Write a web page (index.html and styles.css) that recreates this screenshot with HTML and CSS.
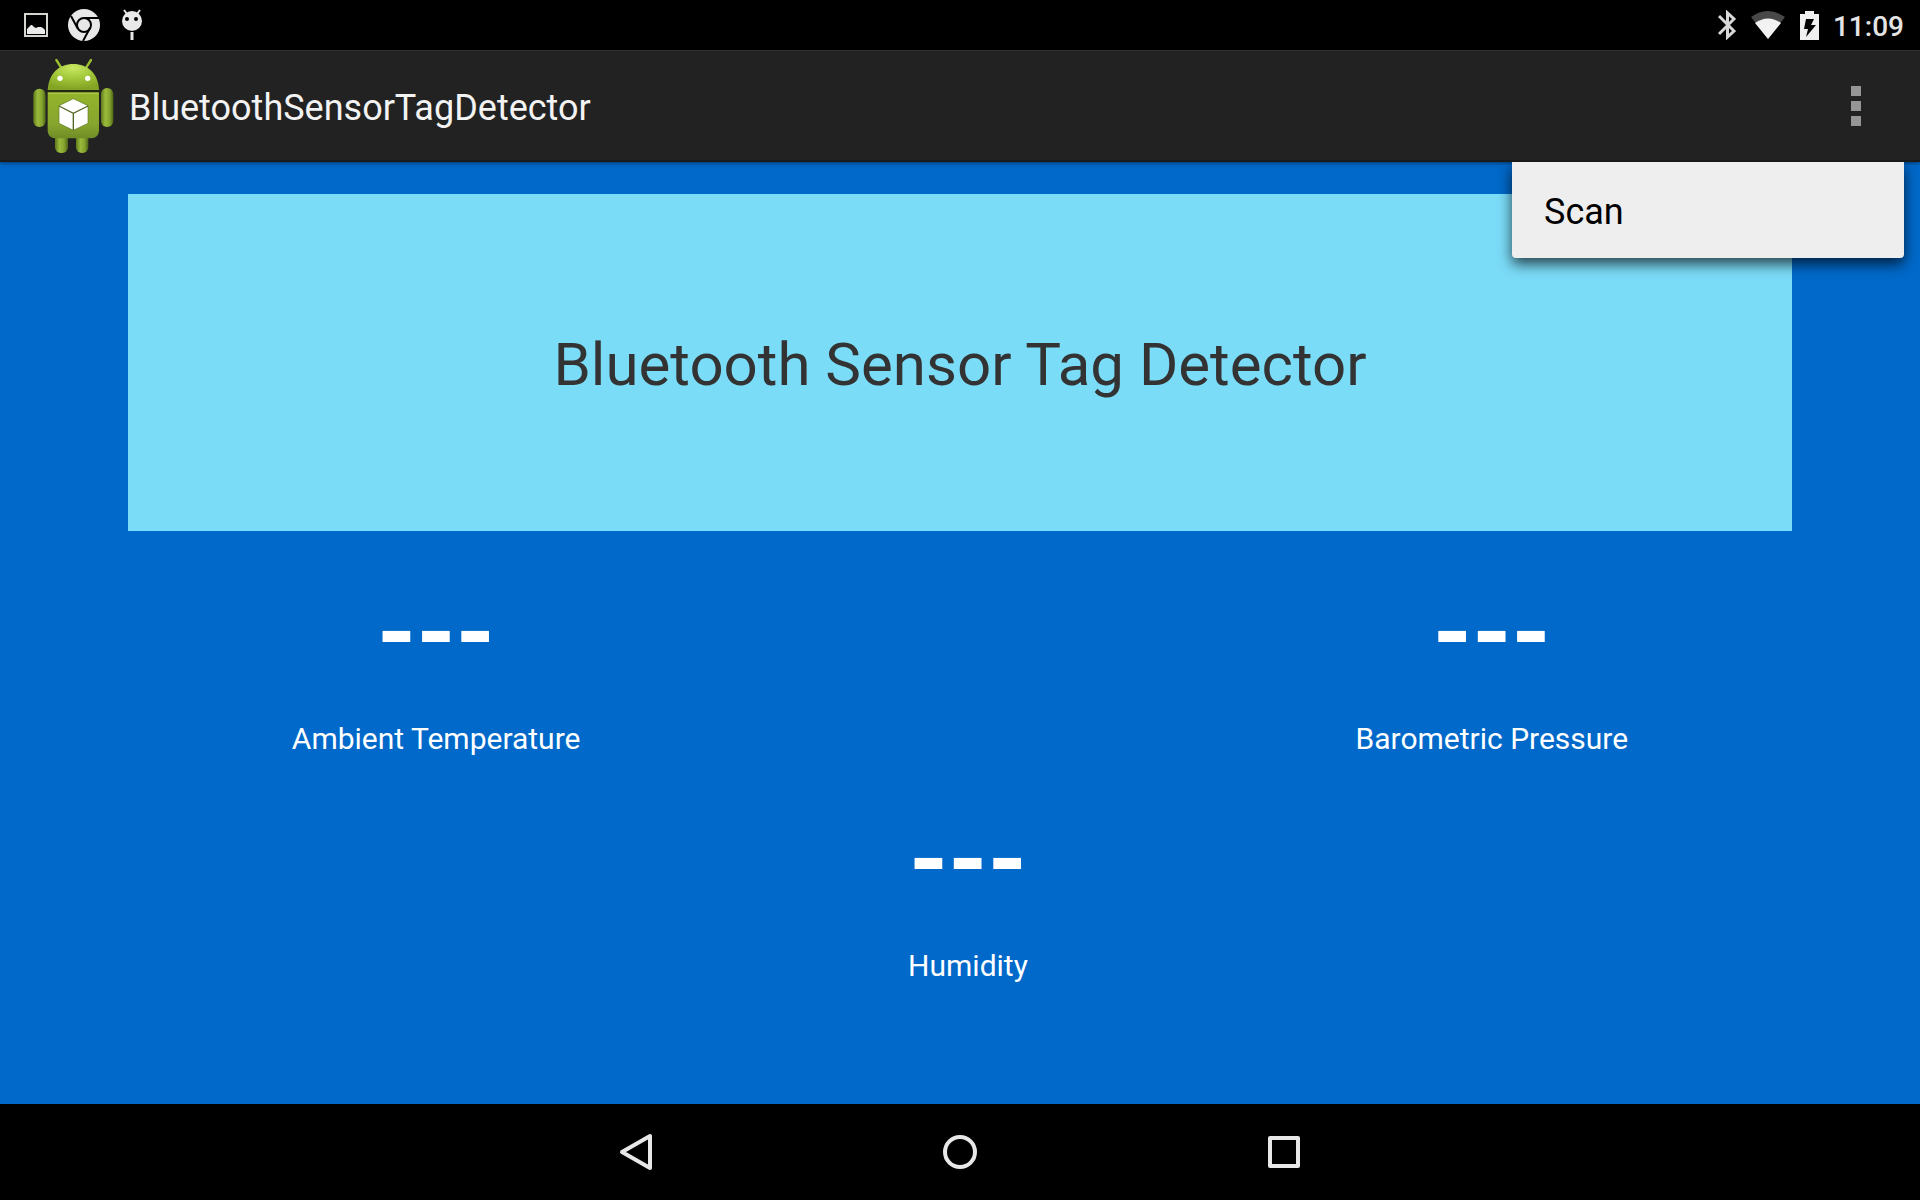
FILE: index.html
```html
<!DOCTYPE html>
<html lang="en">
<head>
<meta charset="UTF-8">
<meta name="viewport" content="width=device-width, initial-scale=1">
<title>BluetoothSensorTagDetector</title>
<link rel="stylesheet" href="styles.css">
</head>
<body>
<div class="status-bar">
<div class="notifications">
<svg class="icon-picture" viewBox="0 0 24 24" width="24" height="24">
<rect x="1" y="1" width="22" height="22" fill="none" stroke="#d4d4d0" stroke-width="2"/>
<path d="M3 21V16L5 14L7 12H8L10 14L12 15L14 14H17L19 15L21 17V21Z" fill="#ebebeb"/>
</svg>
<svg class="icon-chrome" viewBox="0 0 32 32" width="32" height="32">
<circle cx="16" cy="16" r="16" fill="#e8e8e8"/>
<g fill="none" stroke="#000" stroke-width="2">
<circle cx="16" cy="16" r="7"/>
<path d="M16 9H31M10 20L3 7M22 19L15 32"/>
</g>
</svg>
<svg class="icon-debug" viewBox="0 0 24 32" width="24" height="32">
<path d="M4 1L7 5M20 1L17 5" stroke="#e8e8e8" stroke-width="2"/>
<circle cx="12" cy="12" r="10" fill="#e8e8e8"/>
<circle cx="7" cy="10" r="2" fill="#000"/>
<circle cx="16" cy="10" r="2" fill="#000"/>
<path d="M12 23V31" stroke="#e8e8e8" stroke-width="3"/>
</svg>
</div>
<div class="system-status">
<svg class="icon-bluetooth" viewBox="0 0 18 30" width="18" height="30">
<path d="M1 6L16 21L9.500 27V3L16 9L1 24" fill="none" stroke="#d8d8d8" stroke-width="3"/>
</svg>
<svg class="icon-wifi" viewBox="0 0 36 30" width="36" height="30">
<path d="M1 7Q17.500 -5 35 7L18 29Z" fill="#484848"/>
<path d="M5 13Q18 4 31 13L18 29Z" fill="#f2f2f2"/>
</svg>
<svg class="icon-battery" viewBox="0 0 19 30" width="19" height="30">
<path d="M5 1H14V4H19V30H0V4H5Z" fill="#f0f0f0"/>
<path d="M6 9H14L11 15H16L6 27L8 19H4Z" fill="#000"/>
</svg>
<span class="clock">11:09</span>
</div>
</div>

<header class="action-bar">
<svg class="app-icon" viewBox="36 36 252 288" width="84" height="96">
<defs>
<linearGradient id="body" x1="0" y1="0" x2="0" y2="1">
<stop offset="0" stop-color="#94b42c"/>
<stop offset="0.700" stop-color="#86a52e"/>
<stop offset="1" stop-color="#6f8c26"/>
</linearGradient>
<radialGradient id="head" cx="0.500" cy="0.150" r="0.800">
<stop offset="0" stop-color="#c8e763"/>
<stop offset="0.500" stop-color="#a3c83a"/>
<stop offset="1" stop-color="#84a524"/>
</radialGradient>
<linearGradient id="limb" x1="0" y1="0" x2="1" y2="0">
<stop offset="0" stop-color="#5f7a1c"/>
<stop offset="0.350" stop-color="#9aba3c"/>
<stop offset="0.700" stop-color="#85a42d"/>
<stop offset="1" stop-color="#4d6416"/>
</linearGradient>
</defs>
<path d="M109 42L125 67M213 42L197 67" stroke="#9dc02f" stroke-width="7" stroke-linecap="round"/>
<rect x="105" y="248" width="39" height="73" rx="17" fill="url(#limb)"/>
<rect x="168" y="248" width="37" height="73" rx="17" fill="url(#limb)"/>
<rect x="40" y="128" width="37" height="115" rx="18" fill="url(#limb)"/>
<rect x="243" y="126" width="37" height="117" rx="18" fill="url(#limb)"/>
<path d="M83 132C86 82 117 54 160 54S235 82 237 132Z" fill="url(#head)"/>
<path d="M83 139H237V255Q235 276 214 277H105Q85 276 83 255Z" fill="url(#body)"/>
<path d="M82 135H238" stroke="#222b10" stroke-width="5"/>
<path d="M85 142H235" stroke="#b1cf4e" stroke-width="3"/>
<circle cx="120" cy="97" r="8" fill="#fff"/>
<circle cx="203" cy="97" r="8" fill="#fff"/>
<path d="M160 158L204 179V232L160 253L117 232V179Z" fill="#fff" stroke="#657d26" stroke-width="2"/>
<path d="M117 180L160 202L204 180M160 202V253" fill="none" stroke="#536622" stroke-width="4"/>
</svg>
<h1 class="app-title">BluetoothSensorTagDetector</h1>
<button class="overflow" type="button" aria-label="More options" aria-expanded="true" aria-controls="menu">
<span class="dot"></span>
<span class="dot"></span>
<span class="dot"></span>
</button>
<div class="menu" id="menu">
<button class="menu-item" type="button">Scan</button>
</div>
</header>

<main class="content">
<h2 class="banner">Bluetooth Sensor Tag Detector</h2>
<div class="readings">
<div class="reading temperature">
<span class="value">---</span>
<span class="label">Ambient Temperature</span>
</div>
<div class="reading pressure">
<span class="value">---</span>
<span class="label">Barometric Pressure</span>
</div>
<div class="reading humidity">
<span class="value">---</span>
<span class="label">Humidity</span>
</div>
</div>
</main>

<nav class="nav-bar">
<button class="nav-button" type="button" aria-label="Back">
<svg viewBox="0 0 40 40" width="40" height="40">
<path d="M6 20L34 4V36Z"/>
</svg>
</button>
<button class="nav-button" type="button" aria-label="Home">
<svg viewBox="0 0 40 40" width="40" height="40">
<circle cx="20" cy="20" r="15"/>
</svg>
</button>
<button class="nav-button" type="button" aria-label="Recent apps">
<svg viewBox="0 0 40 40" width="40" height="40">
<rect x="6" y="6" width="28" height="28"/>
</svg>
</button>
</nav>
</body>
</html>
```

FILE: styles.css
```css
* {
box-sizing: border-box;
}

body {
margin: 0;
min-height: 100vh;
display: flex;
flex-direction: column;
background-color: #0069ca;
font-family: Roboto, sans-serif;
}

svg {
display: block;
}

button {
border: 0;
padding: 0;
background: none;
font: inherit;
cursor: pointer;
}

/* Status bar */
.status-bar {
display: flex;
justify-content: space-between;
height: 50px;
padding: 0 16px 0 24px;
background-color: #000;
}

.notifications {
display: flex;
align-items: center;
gap: 20px;
}

.system-status {
display: flex;
align-items: center;
gap: 14px;
}

.clock {
padding-top: 2px;
color: #e4e4e4;
font-size: 28px;
font-weight: 500;
}

/* Action bar */
.action-bar {
position: relative;
display: flex;
align-items: center;
height: 112px;
padding: 0 16px 0 32px;
background-color: #222;
border-top: 1px solid #303030;
border-bottom: 2px solid #1a1a1a;
box-shadow: 0 1px 4px rgba(0, 0, 0, 0.5);
}

.app-title {
flex: 1;
margin: 0 0 0 13px;
padding-top: 4px;
color: #f3f3f3;
font-size: 36px;
font-weight: 400;
}

.overflow {
display: flex;
flex-direction: column;
align-items: center;
justify-content: center;
gap: 5px;
width: 96px;
height: 96px;
}

.dot {
width: 10px;
height: 10px;
background-color: #969696;
}

.menu {
position: absolute;
top: 111px;
right: 16px;
width: 392px;
background-color: #eee;
border-radius: 0 0 4px 4px;
box-shadow: 0 6px 14px rgba(0, 0, 0, 0.7);
clip-path: inset(0 -24px -24px -24px);
}

.menu-item {
display: block;
width: 100%;
height: 96px;
padding: 4px 32px 0;
color: #000;
font-size: 36px;
text-align: left;
}

/* Content */
.content {
flex: 1;
padding: 32px 128px;
}

.banner {
display: flex;
align-items: center;
justify-content: center;
min-height: 337px;
margin: 0;
padding-top: 4px;
background-color: #7bdcf8;
color: #333;
font-size: 60px;
font-weight: 400;
text-align: center;
}

.readings {
display: grid;
grid-template-columns: auto auto auto;
row-gap: 45px;
padding-top: 43px;
}

.reading {
display: flex;
flex-direction: column;
align-items: center;
color: #fff;
}

.pressure {
grid-column: 3;
}

.humidity {
grid-column: 2;
}

.value {
font-size: 100px;
font-weight: 700;
line-height: 117px;
}

.label {
margin-top: 30px;
font-size: 30px;
line-height: 35px;
}

/* Navigation bar */
.nav-bar {
display: flex;
align-items: center;
justify-content: center;
gap: 164px;
height: 96px;
background-color: #000;
}

.nav-button {
display: flex;
align-items: center;
justify-content: center;
width: 160px;
height: 96px;
}

.nav-button svg {
fill: none;
stroke: #e8e8e8;
stroke-width: 4;
stroke-linejoin: round;
}
```
